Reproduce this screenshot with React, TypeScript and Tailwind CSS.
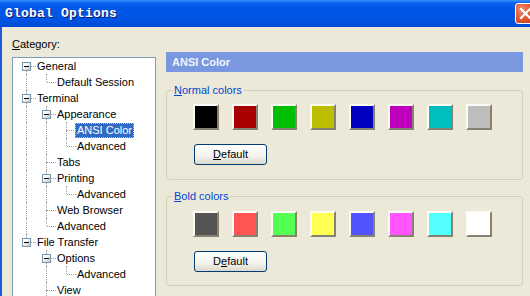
import React from 'react';

type Node = { level: number; label: string; open?: boolean; selected?: boolean };

// tree rows top to bottom; the last rows fall below the window edge
const nodes: Node[] = [
  { level: 1, label: 'General', open: true },
  { level: 2, label: 'Default Session' },
  { level: 1, label: 'Terminal', open: true },
  { level: 2, label: 'Appearance', open: true },
  { level: 3, label: 'ANSI Color', selected: true },
  { level: 3, label: 'Advanced' },
  { level: 2, label: 'Tabs' },
  { level: 2, label: 'Printing', open: true },
  { level: 3, label: 'Advanced' },
  { level: 2, label: 'Web Browser' },
  { level: 2, label: 'Advanced' },
  { level: 1, label: 'File Transfer', open: true },
  { level: 2, label: 'Options', open: true },
  { level: 3, label: 'Advanced' },
  { level: 2, label: 'View' },
  { level: 2, label: 'Filters' },
];

// does the node at i have a later sibling before its parent level closes?
const hasNext = (i: number, level: number) => {
  for (let j = i + 1; j < nodes.length; j++) {
    if (nodes[j].level < level) return false;
    if (nodes[j].level === level) return true;
  }
  return false;
};

const normal = ['#000000', '#a80000', '#00be00', '#bebe00', '#0000be', '#be00be', '#00bebe', '#bdbdbd'];
const bold = ['#545454', '#ff5454', '#54ff54', '#ffff54', '#5454ff', '#ff54ff', '#54ffff', '#ffffff'];

const ExpandBox = () => (
  <div className="absolute left-[6px] top-[4px] w-[9px] h-[9px] border border-[#7a98af] bg-[linear-gradient(135deg,#ffffff_30%,#c6c3b4)] flex items-center justify-center">
    <div className="w-[5px] h-px bg-black" />
  </div>
);

const TreeRow = ({ node, index }: { node: Node; index: number }) => {
  const cells = [];
  for (let d = 1; d <= node.level; d++) {
    if (d < node.level) {
      // ancestor column: line only if that ancestor has more siblings
      let ancestor = index;
      while (nodes[ancestor].level !== d) ancestor--;
      cells.push(
        <div key={d} className="relative w-[20px] h-[16px] shrink-0">
          {hasNext(ancestor, d) && (
            <div className="absolute left-[10px] top-0 bottom-0 border-l border-dotted border-[#a0a0a0]" />
          )}
        </div>
      );
    } else {
      cells.push(
        <div key={d} className="relative w-[20px] h-[16px] shrink-0">
          {index > 0 && <div className="absolute left-[10px] top-0 h-[8px] border-l border-dotted border-[#a0a0a0]" />}
          {hasNext(index, d) && (
            <div className="absolute left-[10px] top-[8px] bottom-0 border-l border-dotted border-[#a0a0a0]" />
          )}
          <div className="absolute left-[11px] right-0 top-[8px] border-t border-dotted border-[#a0a0a0]" />
          {node.open && <ExpandBox />}
        </div>
      );
    }
  }

  return (
    <div className="flex h-[16px] items-center">
      {cells}
      <span
        className={
          node.selected
            ? 'ml-[-1px] px-[2px] h-[15px] leading-[15px] bg-[#316ac5] text-white outline outline-1 outline-dotted outline-[#e7c26a] -outline-offset-1'
            : 'ml-[-1px] px-[2px] h-[15px] leading-[15px] text-black'
        }
      >
        {node.label}
      </span>
    </div>
  );
};

const Swatch = ({ color }: { color: string }) => (
  <div className="w-[26px] h-[26px] border-2 border-t-[#fcfbf4] border-l-[#fcfbf4] border-r-[#85826f] border-b-[#85826f]">
    <div className="w-full h-full" style={{ backgroundColor: color }} />
  </div>
);

const DefaultButton = ({ hotkey }: { hotkey: number }) => (
  <button className="ml-[1px] w-[73px] h-[21px] rounded-[3px] border border-[#003c74] bg-[linear-gradient(to_bottom,#ffffff,#f3f2ec_60%,#dcd8cb)] text-[11px] text-black leading-none">
    {'Default'.split('').map((ch, i) => (
      <span key={i} className={i === hotkey ? 'underline' : ''}>
        {ch}
      </span>
    ))}
  </button>
);

const ColorGroup = ({ title, colors, hotkey, top }: { title: string; colors: string[]; hotkey: number; top: string }) => (
  <div className={`relative h-[90px] rounded-[3px] border border-[#d0d0bf] pl-[26px] ${top}`}>
    <div className="absolute left-[5px] top-[-8px] px-[2px] bg-[#ece9d8] text-[#0046d5] leading-[14px]">
      <span className="underline">{title[0]}</span>
      {title.slice(1)}
    </div>
    <div className="flex gap-[13px]">
      {colors.map((c) => (
        <Swatch key={c} color={c} />
      ))}
    </div>
    <div className="mt-[14px]">
      <DefaultButton hotkey={hotkey} />
    </div>
  </div>
);

export default function App() {
  return (
    <div
      className="w-[530px] h-[296px] overflow-hidden bg-[#ece9d8] flex flex-col text-[11px]"
      style={{ fontFamily: '"Liberation Sans", Arial, sans-serif' }}
    >
      <div className="h-[27px] shrink-0 flex items-center bg-[linear-gradient(to_bottom,#3d8ffc_0px,#0a62f2_3px,#0057e8_8px,#0054e3_20px,#0049d4_27px)]">
        <span
          className="pl-[5px] text-white font-bold text-[13px] tracking-[0.2px] [text-shadow:1px_1px_0_#0a1c6a]"
          style={{ fontFamily: '"Liberation Mono", "Courier New", monospace' }}
        >
          Global Options
        </span>
        <div className="ml-auto mr-[-6px] w-[21px] h-[21px] shrink-0 rounded-[3px] border border-white bg-[radial-gradient(circle_at_30%_30%,#f08a6c,#e0502c_55%,#c73a1c)] flex items-center justify-center">
          <svg width="13" height="13" viewBox="0 0 13 13">
            <path d="M2 2 L11 11 M11 2 L2 11" stroke="white" strokeWidth="2.2" strokeLinecap="square" />
          </svg>
        </div>
      </div>

      <div className="flex-1 flex border-l-2 border-[#1c5ad8] pl-[10px] pt-[10px] min-h-0">
        <div className="w-[144px] shrink-0 flex flex-col">
          <div className="h-[14px] leading-[14px] text-black">
            <span className="underline">C</span>ategory:
          </div>
          <div className="mt-[6px] h-[260px] shrink-0 overflow-hidden border border-[#7f9db9] bg-white pl-[3px]">
            {nodes.map((n, i) => (
              <TreeRow key={i} node={n} index={i} />
            ))}
          </div>
        </div>

        <div className="ml-[10px] w-[357px] shrink-0 pt-[15px]">
          <div className="h-[20px] bg-[#7a98e0] pl-[6px] flex items-center font-bold text-[#f2f5fd]">ANSI Color</div>
          <div className="mt-[18px]">
            <ColorGroup title="Normal colors" colors={normal} hotkey={0} top="pt-[13px]" />
          </div>
          <div className="mt-[16px]">
            <ColorGroup title="Bold colors" colors={bold} hotkey={1} top="pt-[14px]" />
          </div>
        </div>
      </div>
    </div>
  );
}
